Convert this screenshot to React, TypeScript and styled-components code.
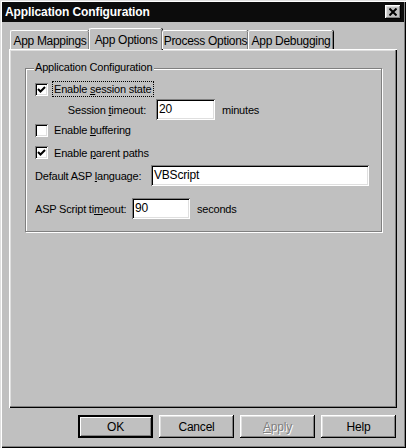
import styled, { createGlobalStyle, css } from "styled-components";

const GlobalStyle = createGlobalStyle`
  * { box-sizing: border-box; }
  body {
    margin: 0;
    background: #c0c0c0;
    font-family: "Liberation Sans", Arial, sans-serif;
    font-size: 11px;
    letter-spacing: -0.2px;
    color: #000;
  }
`;

const raised = css`
  box-shadow: inset -1px -1px #000, inset 1px 1px #fff, inset -2px -2px #808080, inset 2px 2px #dfdfdf;
`;

const sunken = css`
  box-shadow: inset 1px 1px #808080, inset -1px -1px #fff, inset 2px 2px #000, inset -2px -2px #dfdfdf;
`;

function Check() {
  return (
    <svg width="9" height="9" viewBox="0 0 9 9">
      <path d="M1 4 L3.5 6.5 L8 2" fill="none" stroke="#000" strokeWidth="2" />
    </svg>
  );
}

function CloseGlyph() {
  return (
    <svg width="8" height="8" viewBox="0 0 8 8">
      <path d="M0.5 0.5 L7.5 7.5 M7.5 0.5 L0.5 7.5" stroke="#000" strokeWidth="2" />
    </svg>
  );
}

const tabs = [
  { label: "App Mappings", width: 79 },
  { label: "App Options", width: 73 },
  { label: "Process Options", width: 86 },
  { label: "App Debugging", width: 85 },
];

export default function App() {
  return (
    <>
      <GlobalStyle />
      <Window>
        <TitleBar>
          <Title>Application Configuration</Title>
          <CloseButton aria-label="Close">
            <CloseGlyph />
          </CloseButton>
        </TitleBar>

        <Body>
          <TabRow>
            {tabs.map((t, i) => (
              <Tab key={t.label} $active={i === 1} $width={t.width}>
                {t.label}
              </Tab>
            ))}
          </TabRow>

          <Panel>
            <GroupBox>
              <Legend>Application Configuration</Legend>

              <Row $h={20}>
                <CheckBox>
                  <Check />
                </CheckBox>
                <CheckLabel $focused>
                  Enable <u>s</u>ession state
                </CheckLabel>
              </Row>

              <Row $h={21}>
                <FieldLabel $width={111} $right>
                  Session <u>t</u>imeout:
                </FieldLabel>
                <TextBox $width={59} $gap={10}>20</TextBox>
                <Unit>minutes</Unit>
              </Row>

              <Row $h={20}>
                <CheckBox />
                <CheckLabel>
                  Enable <u>b</u>uffering
                </CheckLabel>
              </Row>

              <Row $h={25}>
                <CheckBox>
                  <Check />
                </CheckBox>
                <CheckLabel>
                  Enable <u>p</u>arent paths
                </CheckLabel>
              </Row>

              <Row $h={21}>
                <FieldLabel $width={116}>
                  Default ASP <u>l</u>anguage:
                </FieldLabel>
                <TextBox $width={218}>VBScript</TextBox>
              </Row>

              <Row $h={21} $top={12}>
                <FieldLabel $width={97}>
                  ASP Script ti<u>m</u>eout:
                </FieldLabel>
                <TextBox $width={58}>90</TextBox>
                <Unit>seconds</Unit>
              </Row>
            </GroupBox>
          </Panel>

          <ButtonRow>
            <Button $default>OK</Button>
            <Button>Cancel</Button>
            <Button disabled>
              <u>A</u>pply
            </Button>
            <Button>Help</Button>
          </ButtonRow>
        </Body>
      </Window>
    </>
  );
}

const Window = styled.div`
  width: 406px;
  height: 448px;
  padding: 2px;
  background: #c0c0c0;
  display: flex;
  flex-direction: column;
  box-shadow: inset 1px 1px #dfdfdf, inset 2px 2px #fff, inset -1px -1px #000, inset -2px -2px #808080;
`;

const TitleBar = styled.div`
  height: 20px;
  background: #0c0c0c;
  display: flex;
  align-items: center;
  justify-content: space-between;
  padding: 0 3px 0 3px;
`;

const Title = styled.span`
  color: #fff;
  font-weight: bold;
  font-size: 12px;
  letter-spacing: -0.1px;
`;

const CloseButton = styled.button`
  width: 16px;
  height: 14px;
  padding: 0;
  border: none;
  background: #c0c0c0;
  display: flex;
  align-items: center;
  justify-content: center;
  ${raised}
`;

const Body = styled.div`
  flex: 1;
  display: flex;
  flex-direction: column;
  padding: 6px 7px 0 7px;
`;

const TabRow = styled.div`
  display: flex;
  align-items: flex-end;
  height: 21px;
  position: relative;
  z-index: 1;
  padding-left: 1px;
`;

const Tab = styled.div<{ $active?: boolean; $width: number }>`
  width: ${(p) => p.$width}px;
  height: ${(p) => (p.$active ? 22 : 19)}px;
  margin-bottom: ${(p) => (p.$active ? -1 : 0)}px;
  display: flex;
  align-items: center;
  justify-content: center;
  padding-top: ${(p) => (p.$active ? 0 : 1)}px;
  background: #c0c0c0;
  border-top-left-radius: 2px;
  border-top-right-radius: 2px;
  border-left: 1px solid #fff;
  border-top: 1px solid #fff;
  box-shadow: inset -1px 0 #808080, 1px 0 #000;
  white-space: nowrap;
  font-size: 12px;
  letter-spacing: -0.3px;
`;

const Panel = styled.div`
  height: 359px;
  background: #c0c0c0;
  padding: 16px 15px 0 16px;
  box-shadow: inset 1px 1px #fff, inset -1px -1px #000, inset -2px -2px #808080, inset 2px 2px #dfdfdf;
`;

const GroupBox = styled.div`
  position: relative;
  margin-top: 3px;
  border: 1px solid #808080;
  box-shadow: inset 1px 1px #fff, 1px 1px #fff;
  padding: 10px 9px 12px 9px;
  display: flex;
  flex-direction: column;
`;

const Legend = styled.span`
  position: absolute;
  top: -8px;
  left: 8px;
  padding: 0 2px 0 1px;
  background: #c0c0c0;
`;

const Row = styled.div<{ $h: number; $top?: number }>`
  height: ${(p) => p.$h}px;
  margin-top: ${(p) => p.$top ?? 0}px;
  display: flex;
  align-items: center;
`;

const CheckBox = styled.span`
  width: 13px;
  height: 13px;
  background: #fff;
  flex-shrink: 0;
  display: flex;
  align-items: center;
  justify-content: center;
  ${sunken}
`;

const CheckLabel = styled.span<{ $focused?: boolean }>`
  margin-left: 4px;
  padding: 1px 1px;
  border: 1px dotted ${(p) => (p.$focused ? "#000" : "transparent")};
  white-space: nowrap;
`;

const FieldLabel = styled.span<{ $width: number; $right?: boolean }>`
  width: ${(p) => p.$width}px;
  text-align: ${(p) => (p.$right ? "right" : "left")};
  white-space: nowrap;
  flex-shrink: 0;
`;

const TextBox = styled.div<{ $width: number; $gap?: number }>`
  width: ${(p) => p.$width}px;
  height: 21px;
  margin-left: ${(p) => p.$gap ?? 0}px;
  background: #fff;
  padding: 3px 3px;
  line-height: 14px;
  font-size: 12px;
  ${sunken}
`;

const Unit = styled.span`
  margin-left: 7px;
`;

const ButtonRow = styled.div`
  display: flex;
  justify-content: flex-end;
  gap: 6px;
  margin-top: 7px;
  padding-right: 1px;
`;

const Button = styled.button<{ $default?: boolean }>`
  width: 75px;
  height: 23px;
  padding: 0;
  border: none;
  background: #c0c0c0;
  font-family: "Liberation Sans", Arial, sans-serif;
  font-size: 12px;
  letter-spacing: -0.2px;
  color: #000;
  ${(p) =>
    p.$default
      ? css`
          outline: 1px solid #000;
          outline-offset: -1px;
          box-shadow: inset -2px -2px #000, inset 2px 2px #000, inset 3px 3px #fff, inset -3px -3px #808080;
        `
      : raised}

  &:disabled {
    color: #808080;
    text-shadow: 1px 1px #fff;
  }
`;
